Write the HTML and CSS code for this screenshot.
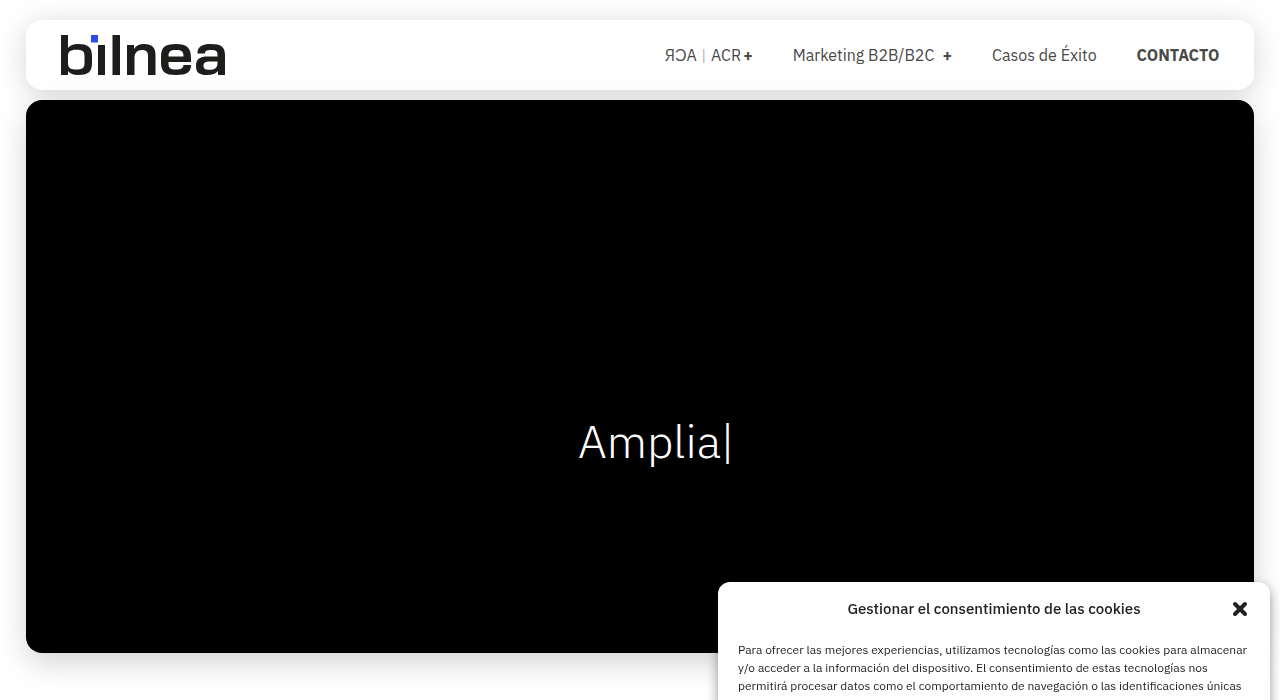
FILE: index.html
```html
<!DOCTYPE html>
<html lang="es">
  <head>
    <meta charset="UTF-8" />
    <meta name="viewport" content="width=device-width, initial-scale=1" />
    <title>bilnea</title>
    <link rel="stylesheet" href="styles.css">
  </head>
  <body>
    <header class="site-header">
      <a class="logo" href="#" aria-label="bilnea">
        <svg width="164" height="40" viewBox="0 0 164 40" aria-hidden="true">
          <g fill="#1d1d1b" fill-rule="evenodd">
            <path d="M0 0H7V13Q10 9 17 9C27 9 31 12 31 21V28C31 37 27 40 17 40Q10 40 7 36V40H0ZM7 21V28C7 32.500 9 34.500 15 34.500C21.500 34.500 23.500 33 23.500 28V21C23.500 16 21.500 14.800 15 14.800C9 14.800 7 17 7 21Z" />
            <path d="M37 10H44V40H37ZM51.500 0H59V40H51.500Z" />
            <path d="M66 10H73V14Q76 9 83 9C91 9 94.500 12.500 94.500 20V40H87V22C87 17 86 15 81 15C76 15 73.500 18 73.500 23V40H66Z" />
            <path d="M115 9C126 9 130 13 130 23V27H107.500V28C107.500 33 109 34.500 115 34.500C120 34.500 122 33.500 122.500 30H130C130 37 126 40 115 40C104 40 100 37 100 27V22C100 12 104 9 115 9ZM107.500 21.500H122.500C122.500 16.500 121 15 115 15C109 15 107.500 16.500 107.500 21.500Z" />
            <path d="M150 9C160 9 164 12 164 20V40H157V36Q154 40 146 40C138 40 135 37.500 135 31C135 24 138.500 21.500 147 21.500H156.500V20C156.500 16 155 15 150 15C145.500 15 144 16 144 18.500H136.500C136.500 11.500 141 9 150 9ZM156.500 26.500H149C144.500 26.500 142.500 27.500 142.500 30.500C142.500 33.500 144 34.800 148 34.800C154 34.800 156.500 33 156.500 28Z" />
          </g>
          <path fill="#3049e8" d="M30 0H37V7.500H30Z" />
        </svg>
      </a>
      <nav class="menu" aria-label="Principal">
        <a class="has-submenu" href="#">ЯƆA<span class="divider">|</span>ACR</a>
        <a class="has-submenu spaced" href="#">Marketing B2B/B2C</a>
        <a href="#">Casos de Éxito</a>
        <a class="contact" href="#">CONTACTO</a>
      </nav>
    </header>

    <main class="hero">
      <h1 class="typed">Amplia<span class="cursor">|</span></h1>
    </main>

    <section class="cookies" role="dialog" aria-labelledby="cookies-title">
      <div class="cookies-header">
        <h2 id="cookies-title">Gestionar el consentimiento de las cookies</h2>
        <button class="close" type="button" aria-label="Cerrar">
          <svg width="16" height="16" viewBox="0 0 16 16" aria-hidden="true">
            <path d="M3 3L13 13M13 3L3 13" stroke="#222" stroke-width="4" stroke-linecap="round" />
          </svg>
        </button>
      </div>
      <p>Para ofrecer las mejores experiencias, utilizamos tecnologías como las cookies para almacenar y/o acceder a la información del dispositivo. El consentimiento de estas tecnologías nos permitirá procesar datos como el comportamiento de navegación o las identificaciones únicas en este sitio. No consentir o retirar el consentimiento, puede afectar negativamente a ciertas características y funciones.</p>
    </section>
  </body>
</html>
```
FILE: styles.css
```css
/* Reset */
* {
  margin: 0;
  padding: 0;
  box-sizing: border-box;
}

body {
  font-family: "IBM Plex Sans", "Open Sans", sans-serif;
  background: #fff;
  color: #4a4a4a;
  min-height: 100vh;
  padding: 20px 2%;
  overflow: hidden;
}

/* Header */
.site-header {
  display: flex;
  justify-content: space-between;
  align-items: center;
  height: 70px;
  padding: 0 35px;
  margin-bottom: 10px;
  background: #fff;
  border-radius: 16px;
  box-shadow: 0 5px 30px rgba(0, 0, 0, 0.17);
}

.logo svg {
  display: block;
}

.menu {
  display: flex;
  align-items: center;
  gap: 40px;
}

.menu a {
  color: #4a4a4a;
  font-size: 16px;
  line-height: 24px;
  text-decoration: none;
  white-space: nowrap;
}

.menu .has-submenu::after {
  content: "+";
  font-weight: 700;
  margin-left: 2px;
}

.menu .spaced::after {
  margin-left: 8px;
}

.menu .divider {
  margin: 0 5px;
  font-weight: 200;
}

.menu .contact {
  font-weight: 700;
}

/* Hero */
.hero {
  display: flex;
  justify-content: center;
  align-items: center;
  height: 79vh;
  padding: 128px 0 0 32px;
  background: #000;
  border-radius: 16px;
  box-shadow: 0 10px 30px rgba(0, 0, 0, 0.17);
}

.typed {
  color: #fff;
  font-size: 46px;
  font-weight: 300;
  line-height: 60px;
}

/* Cookie notice */
.cookies {
  position: fixed;
  top: calc(100vh - 118px);
  right: 10px;
  width: 552px;
  max-width: calc(100% - 20px);
  padding: 15px 20px 20px;
  background: #fff;
  border-radius: 12px;
  box-shadow: 0 4px 12px rgba(0, 0, 0, 0.4);
  color: #222;
}

.cookies-header {
  display: grid;
  grid-template-columns: 20px 1fr 20px;
  align-items: center;
  margin-bottom: 20px;
}

.cookies h2 {
  grid-column: 2;
  font-size: 15px;
  font-weight: 500;
  line-height: 24px;
  text-align: center;
}

.close {
  display: flex;
  justify-content: center;
  border: none;
  background: none;
  cursor: pointer;
}

.cookies p {
  font-size: 12px;
  line-height: 18px;
}
```
